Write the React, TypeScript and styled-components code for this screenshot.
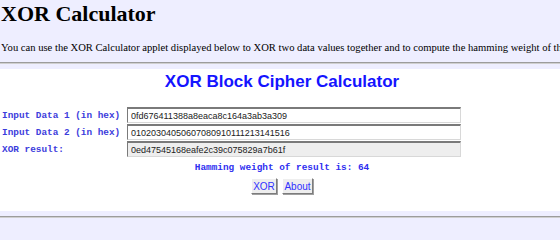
import React from "react";
import styled, { createGlobalStyle } from "styled-components";

const GlobalStyle = createGlobalStyle`
  html, body {
    margin: 0;
    padding: 0;
    background: #eeeeff;
    overflow: hidden;
  }
  body {
    font-family: "Liberation Serif", "Times New Roman", serif;
    color: #000;
  }
`;

const Page = styled.div`
  width: 560px;
`;

const Heading = styled.h1`
  margin: 0;
  padding: 1px 0 0 1px;
  font-family: "Liberation Serif", "Times New Roman", serif;
  font-size: 22px;
  line-height: 26px;
  font-weight: bold;
`;

const Intro = styled.p`
  margin: 14px 0 0 1px;
  font-size: 10.6px;
  line-height: 13px;
  white-space: nowrap;
  overflow: hidden;
`;

const Rule = styled.hr`
  margin: 8px 0 0;
  border: none;
  border-top: 1px solid #9c9c9c;
  border-bottom: 1px solid #cfcfcf;
  height: 0;
`;

const Applet = styled.div`
  margin-top: 5px;
  background: #fff;
  width: 564px;
  height: 142px;
  padding-top: 3px;
  box-sizing: border-box;
`;

const Title = styled.div`
  text-align: center;
  font-family: "Liberation Sans", Arial, sans-serif;
  font-weight: bold;
  font-size: 17px;
  line-height: 20px;
  color: #1414ff;
`;

const Rows = styled.div`
  margin-top: 15px;
  padding-left: 2px;
  display: flex;
  flex-direction: column;
  gap: 1px;
`;

const Row = styled.div`
  display: flex;
  align-items: center;
`;

const Label = styled.label`
  width: 125px;
  font-family: "Liberation Mono", "Courier New", monospace;
  font-weight: bold;
  font-size: 9.4px;
  color: #3c3cdc;
  white-space: pre;
`;

const Field = styled.input<{ $muted?: boolean }>`
  width: 334px;
  height: 16px;
  box-sizing: border-box;
  padding: 0 3px;
  margin: 0;
  font-family: "Liberation Sans", Arial, sans-serif;
  font-size: 9px;
  color: #222;
  background: ${(p) => (p.$muted ? "#eeeeee" : "#ffffff")};
  border-top: 2px solid #7a7a7a;
  border-left: 1px solid #7a7a7a;
  border-right: 1px solid #d8d8d8;
  border-bottom: 1px solid #d8d8d8;
  outline: none;
`;

const Weight = styled.div`
  margin-top: 5px;
  text-align: center;
  font-family: "Liberation Mono", "Courier New", monospace;
  font-weight: bold;
  font-size: 9.4px;
  line-height: 12px;
  color: #2e2ef0;
`;

const Buttons = styled.div`
  margin-top: 4px;
  display: flex;
  justify-content: center;
  gap: 5px;
`;

const Button = styled.button<{ $w: number }>`
  width: ${(p) => p.$w}px;
  height: 16px;
  padding: 0;
  box-sizing: border-box;
  font-family: "Liberation Sans", Arial, sans-serif;
  font-size: 10px;
  color: #3030ff;
  background: #eeeeee;
  border: 1px solid;
  border-color: #ffffff #7c7c7c #7c7c7c #ffffff;
  box-shadow: 1px 1px 0 #a0a0a0;
`;

const BottomRule = styled(Rule)`
  margin-top: 5px;
`;

export default function App() {
  return (
    <Page>
      <GlobalStyle />
      <Heading>XOR Calculator</Heading>
      <Intro>
        You can use the XOR Calculator applet displayed below to XOR two data
        values together and to compute the hamming weight of the result.
      </Intro>
      <Rule />
      <Applet>
        <Title>XOR Block Cipher Calculator</Title>
        <Rows>
          <Row>
            <Label>Input Data 1 (in hex)</Label>
            <Field readOnly value="0fd676411388a8eaca8c164a3ab3a309" />
          </Row>
          <Row>
            <Label>Input Data 2 (in hex)</Label>
            <Field readOnly value="01020304050607080910111213141516" />
          </Row>
          <Row>
            <Label>XOR result:</Label>
            <Field $muted readOnly value="0ed47545168eafe2c39c075829a7b61f" />
          </Row>
        </Rows>
        <Weight>Hamming weight of result is: 64</Weight>
        <Buttons>
          <Button $w={26}>XOR</Button>
          <Button $w={31}>About</Button>
        </Buttons>
      </Applet>
      <BottomRule />
    </Page>
  );
}
